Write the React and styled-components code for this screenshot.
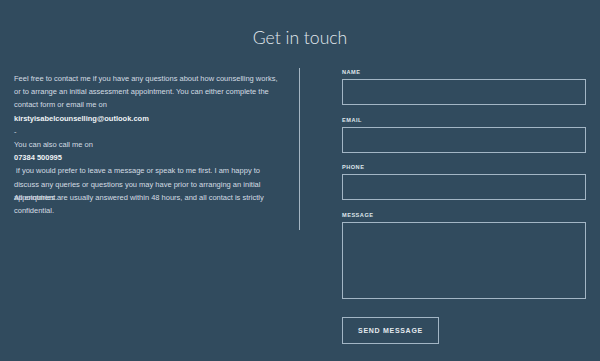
import React from "react";
import styled, { createGlobalStyle } from "styled-components";

const Global = createGlobalStyle`
  html, body { margin: 0; padding: 0; background: #314b5e; }
  body { font-family: "Liberation Sans", Arial, sans-serif; }
  * { box-sizing: border-box; }
`;

const Page = styled.div`
  width: 600px;
  height: 361px;
  background: #314b5e;
  overflow: hidden;
  padding-top: 26px;
`;

const Title = styled.h1`
  margin: 0;
  font-family: Lato, "Liberation Sans", sans-serif;
  font-weight: 300;
  font-size: 17.6px;
  line-height: 24px;
  color: #e2e9ee;
  text-align: center;
`;

const Row = styled.div`
  display: flex;
  align-items: flex-start;
  margin-top: 18px;
  padding-left: 14px;
`;

const Info = styled.div`
  width: 272px;
  padding-top: 4px;
  font-size: 7.5px;
  line-height: 13.2px;
  color: #d3dce3;
`;

const Para = styled.p`
  margin: 0;
  margin-top: ${(p) => (p.$overlap ? "-13.2px" : "0")};
`;

const Strong = styled.p`
  margin: 0;
  font-weight: 700;
  color: #eef2f5;
`;

const Divider = styled.div`
  width: 1px;
  height: 162px;
  margin-left: 13px;
  background: #a5b6c3;
`;

const Form = styled.form`
  display: flex;
  flex-direction: column;
  gap: 10.5px;
  width: 244px;
  margin-left: 42px;
`;

const Field = styled.label`
  display: flex;
  flex-direction: column;
  gap: 3px;
`;

const Label = styled.span`
  font-size: 5.6px;
  line-height: 8px;
  font-weight: 700;
  letter-spacing: 0.5px;
  color: #dfe6eb;
  text-transform: uppercase;
`;

const Input = styled.input`
  display: block;
  width: 100%;
  height: 26px;
  margin: 0;
  background: transparent;
  border: 1px solid #a3b6c5;
  border-radius: 0;
  outline: none;
`;

const Area = styled.textarea`
  display: block;
  width: 100%;
  height: 77px;
  margin: 0;
  background: transparent;
  border: 1px solid #a3b6c5;
  border-radius: 0;
  resize: none;
  outline: none;
`;

const Button = styled.button`
  width: 97px;
  height: 27px;
  margin-top: 8px;
  background: transparent;
  border: 1px solid #a3b6c5;
  border-radius: 0;
  color: #e3e9ee;
  font-family: "Liberation Sans", Arial, sans-serif;
  font-size: 7px;
  font-weight: 700;
  letter-spacing: 0.7px;
  text-transform: uppercase;
  padding: 0;
`;

export default function App() {
  return (
    <Page>
      <Global />
      <Title>Get in touch</Title>
      <Row>
        <Info>
          <Para>
            Feel free to contact me if you have any questions about how counselling works, or to arrange an initial assessment appointment. You can either complete the contact form or email me on
          </Para>
          <Strong>kirstyisabelcounselling@outlook.com</Strong>
          <Para>-</Para>
          <Para>You can also call me on</Para>
          <Strong>07384 500995</Strong>
          <Para>
            {"\u00a0"}if you would prefer to leave a message or speak to me first. I am happy to discuss any queries or questions you may have prior to arranging an initial appointment.
          </Para>
          <Para $overlap>
            All enquiries are usually answered within 48 hours, and all contact is strictly confidential.
          </Para>
        </Info>
        <Divider />
        <Form onSubmit={(e) => e.preventDefault()}>
          <Field>
            <Label>Name</Label>
            <Input type="text" />
          </Field>
          <Field>
            <Label>Email</Label>
            <Input type="email" />
          </Field>
          <Field>
            <Label>Phone</Label>
            <Input type="tel" />
          </Field>
          <Field>
            <Label>Message</Label>
            <Area />
          </Field>
          <Button type="submit">Send Message</Button>
        </Form>
      </Row>
    </Page>
  );
}
